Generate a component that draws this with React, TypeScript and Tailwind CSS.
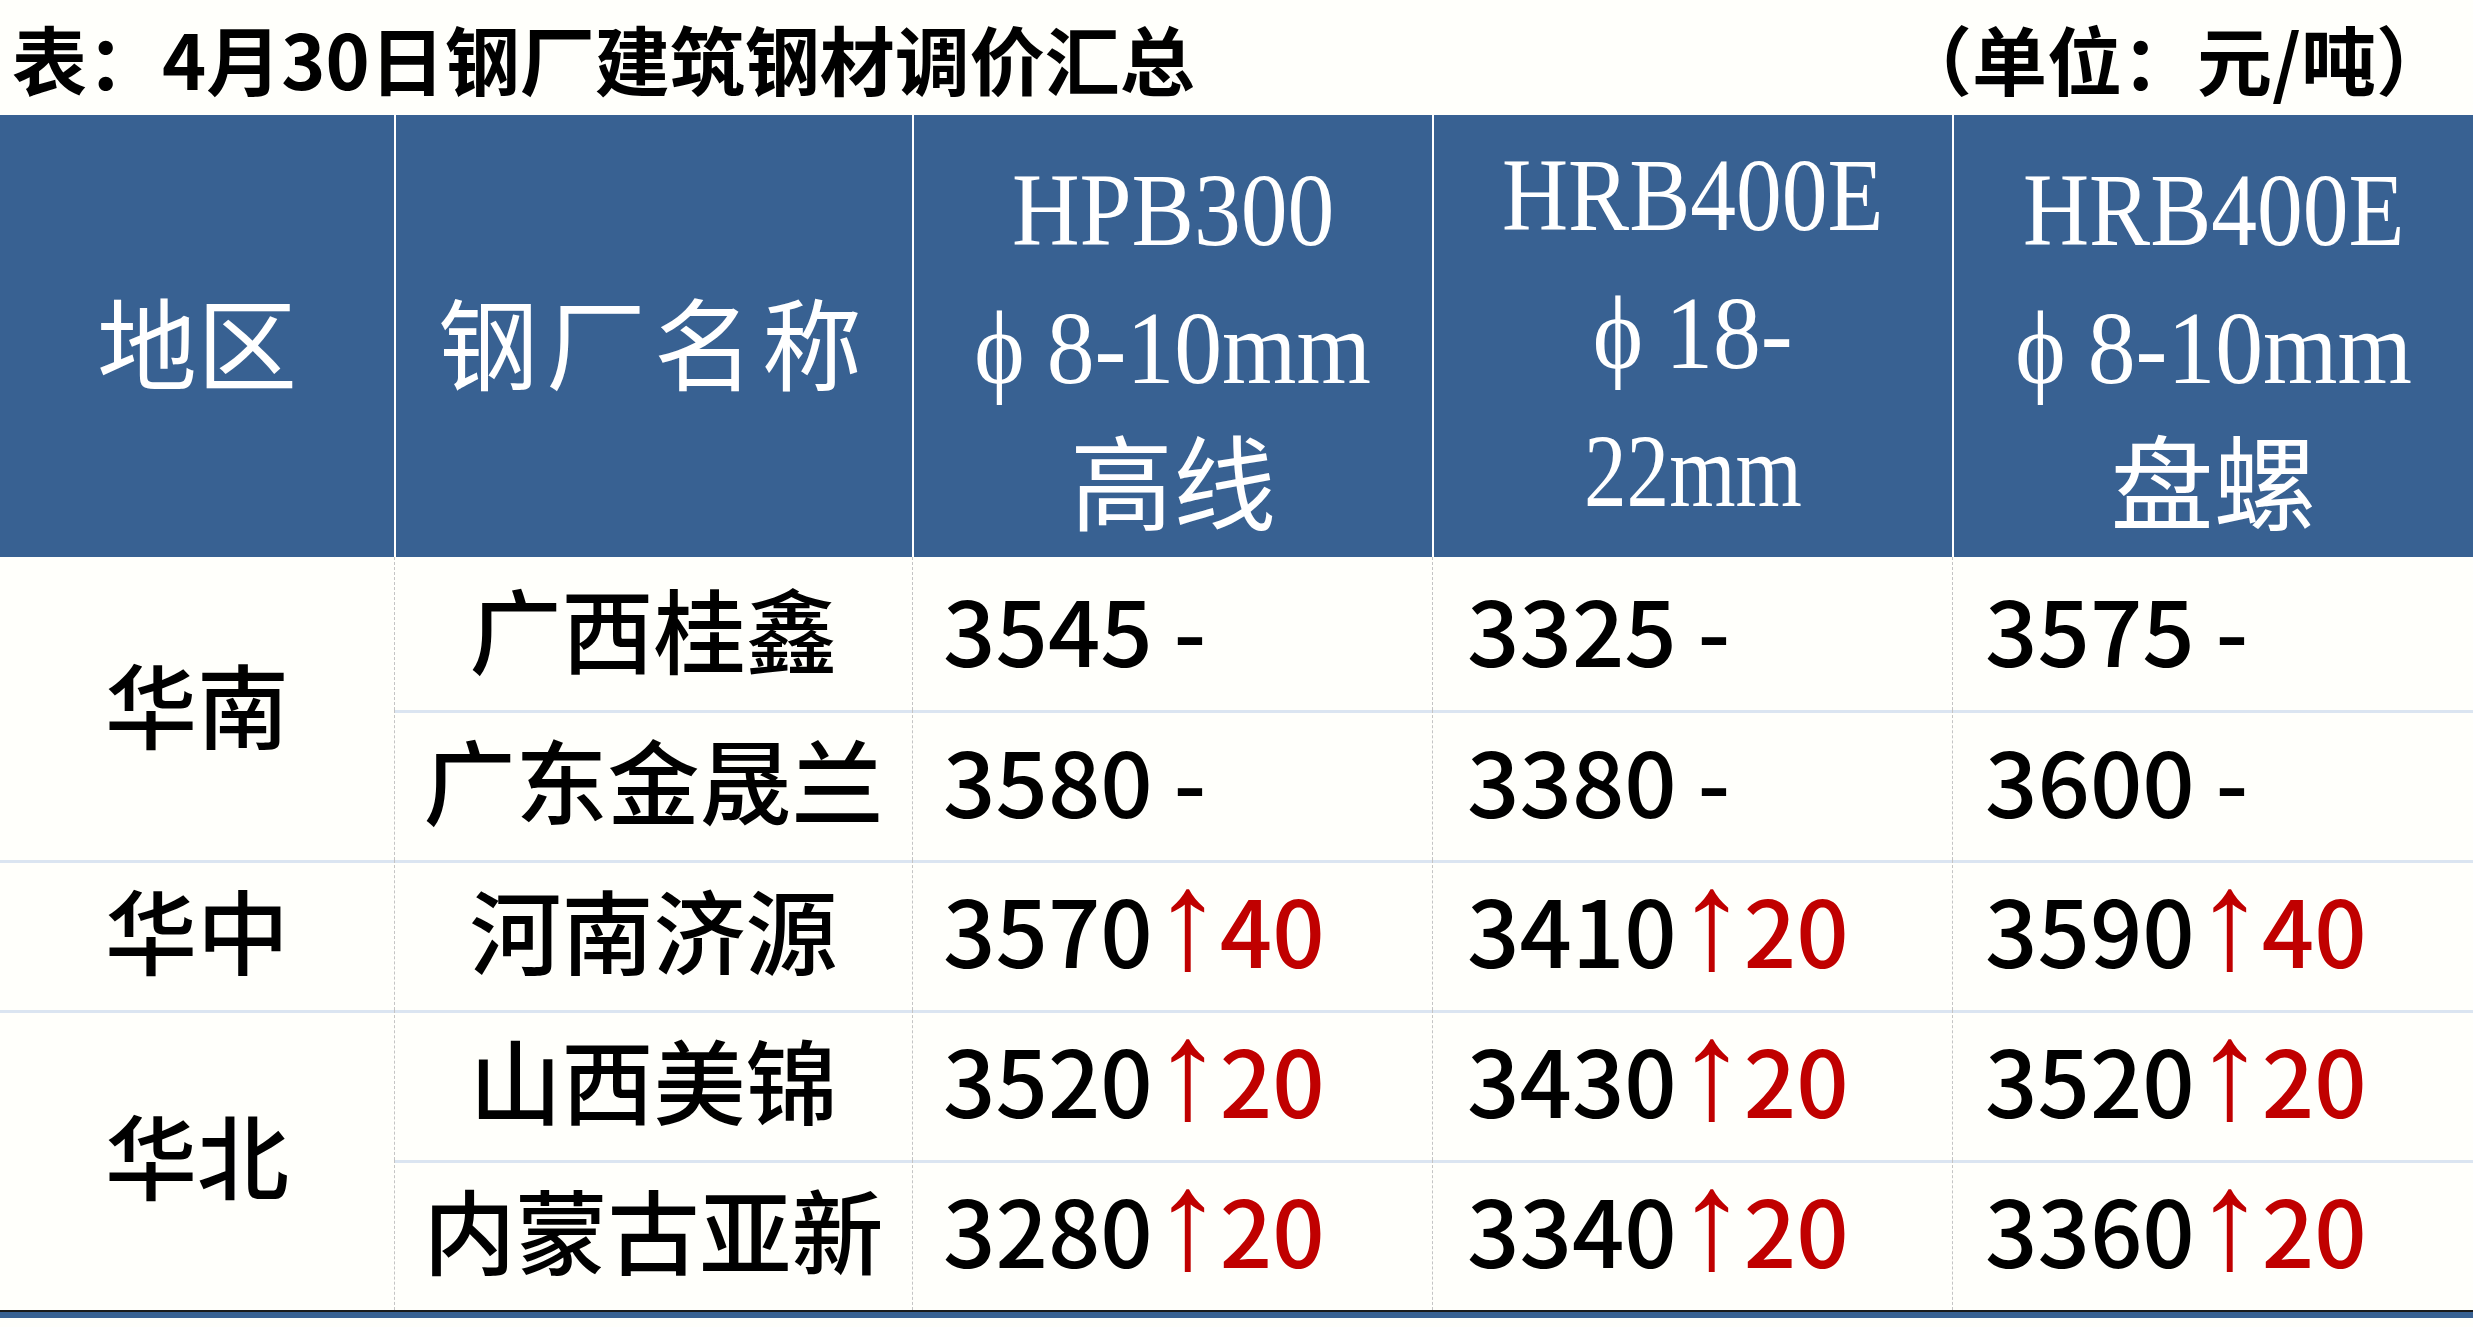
import React from 'react'

type Val = { price: string; up?: string }
type Row = { region?: string; span?: number; mill: string; vals: Val[] }

const rows: Row[] = [
  { region: '华南', span: 2, mill: '广西桂鑫', vals: [{ price: '3545' }, { price: '3325' }, { price: '3575' }] },
  { mill: '广东金晟兰', vals: [{ price: '3580' }, { price: '3380' }, { price: '3600' }] },
  { region: '华中', span: 1, mill: '河南济源', vals: [{ price: '3570', up: '40' }, { price: '3410', up: '20' }, { price: '3590', up: '40' }] },
  { region: '华北', span: 2, mill: '山西美锦', vals: [{ price: '3520', up: '20' }, { price: '3430', up: '20' }, { price: '3520', up: '20' }] },
  { mill: '内蒙古亚新', vals: [{ price: '3280', up: '20' }, { price: '3340', up: '20' }, { price: '3360', up: '20' }] },
]

const valPad = ['pl-[30px]', 'pl-[34px]', 'pl-[32px]']

function SpecLine({ children, scale }: { children: React.ReactNode; scale: string }) {
  return (
    <div className={`h-[138px] leading-[138px] whitespace-nowrap font-['Liberation_Serif','DejaVu_Serif',serif] ${scale}`}>
      {children}
    </div>
  )
}

function CjkLine({ children }: { children: React.ReactNode }) {
  return (
    <div className="h-[138px] leading-[124px] whitespace-nowrap text-[103px] font-['Noto_Sans_CJK_SC',sans-serif]">
      {children}
    </div>
  )
}

function Phi() {
  return <span className="mr-[24px]">ϕ</span>
}

function Price({ v }: { v: Val }) {
  return (
    <span className="whitespace-nowrap">
      <span className="text-black">{v.price}</span>
      {v.up ? (
        <>
          <span className="text-[#c00000] font-normal font-['Liberation_Sans',sans-serif] text-[140px] leading-[0px] mr-[-3px]">↑</span>
          <span className="text-[#c00000]">{v.up}</span>
        </>
      ) : (
        <span className="text-black"> -</span>
      )}
    </span>
  )
}

export default function App() {
  return (
    <div className="w-[2473px] h-[1327px] bg-[#fffffb] overflow-hidden font-['Noto_Sans_CJK_SC',sans-serif]">
      <div className="h-[115px] flex items-center justify-between pl-[12px] pr-[22px] text-[75px] font-bold text-black leading-none">
        <span>表：4月30日钢厂建筑钢材调价汇总</span>
        <span>（单位：元/吨）</span>
      </div>

      <div className="grid grid-cols-[394px_518px_520px_520px_521px] grid-rows-[442px_153px_150px_150px_150px_150px]">
        {/* header */}
        <div className="bg-[#386192] text-white flex items-center justify-center pt-[8px] text-[100px] leading-none">
          地区
        </div>
        <div className="bg-[#386192] text-white flex items-center justify-center pt-[8px] text-[100px] leading-none tracking-[8px] border-l-2 border-white">
          钢厂名称
        </div>
        <div className="bg-[#386192] text-white flex flex-col items-center pt-[26px] text-[104px] border-l-2 border-white overflow-hidden">
          <SpecLine scale="scale-x-[0.9]">HPB300</SpecLine>
          <SpecLine scale="scale-x-[0.92]"><Phi />8-10mm</SpecLine>
          <CjkLine>高线</CjkLine>
        </div>
        <div className="bg-[#386192] text-white flex flex-col items-center pt-[11px] text-[104px] border-l-2 border-white overflow-hidden">
          <SpecLine scale="scale-x-[0.88]">HRB400E</SpecLine>
          <SpecLine scale="scale-x-[0.92]"><Phi />18-</SpecLine>
          <SpecLine scale="scale-x-[0.82]">22mm</SpecLine>
        </div>
        <div className="bg-[#386192] text-white flex flex-col items-center pt-[26px] text-[104px] border-l-2 border-white overflow-hidden">
          <SpecLine scale="scale-x-[0.88]">HRB400E</SpecLine>
          <SpecLine scale="scale-x-[0.92]"><Phi />8-10mm</SpecLine>
          <CjkLine>盘螺</CjkLine>
        </div>

        {/* body */}
        {rows.map((r, i) => {
          const line = i > 0 ? 'shadow-[inset_0_3px_0_#dbe5f1]' : ''
          return (
            <React.Fragment key={r.mill}>
              {r.region && (
                <div
                  className={`flex items-center justify-center pb-[14px] text-[92px] font-medium leading-none text-black ${r.span === 2 ? 'row-span-2' : ''} ${line}`}
                >
                  {r.region}
                </div>
              )}
              <div className={`flex items-center justify-center pb-[14px] text-[92px] font-medium leading-none text-black border-l border-dashed border-[#c4c4c4] ${line}`}>
                {r.mill}
              </div>
              {r.vals.map((v, j) => (
                <div
                  key={j}
                  className={`flex items-center pb-[14px] text-[92px] font-medium leading-none border-l border-dashed border-[#c4c4c4] ${valPad[j]} ${line}`}
                >
                  <Price v={v} />
                </div>
              ))}
            </React.Fragment>
          )
        })}
      </div>
      <div className="h-[2px] bg-[#1a1a1a]" />
      <div className="h-[6px] bg-[#386192]" />
    </div>
  )
}
